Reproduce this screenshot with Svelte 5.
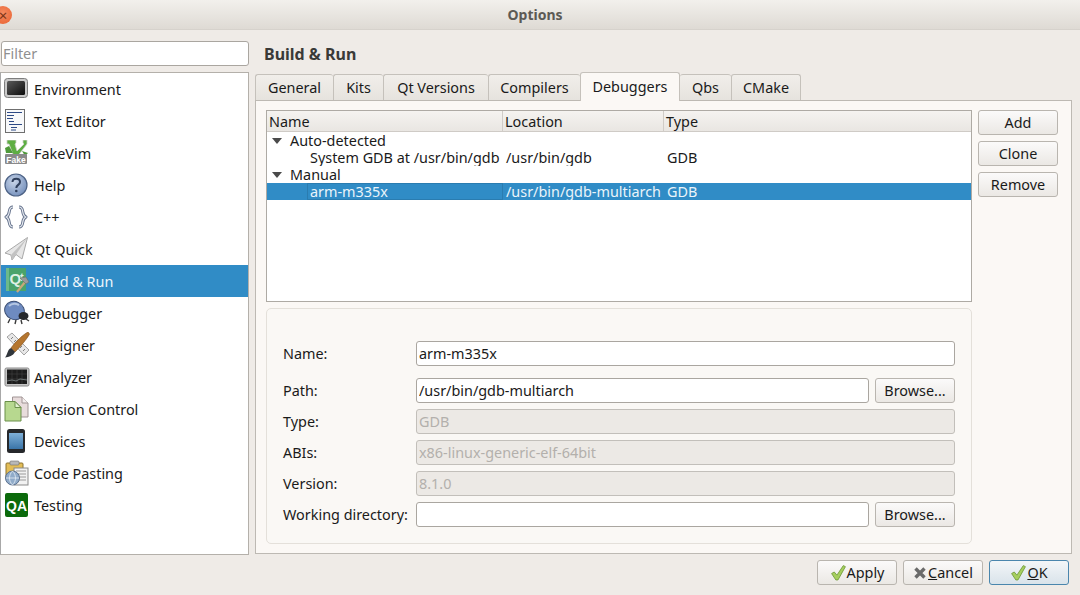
<script lang="ts">
	const categories = [
		{ id: 'env', label: 'Environment' },
		{ id: 'text', label: 'Text Editor' },
		{ id: 'vim', label: 'FakeVim' },
		{ id: 'help', label: 'Help' },
		{ id: 'cpp', label: 'C++' },
		{ id: 'quick', label: 'Qt Quick' },
		{ id: 'build', label: 'Build & Run' },
		{ id: 'debug', label: 'Debugger' },
		{ id: 'designer', label: 'Designer' },
		{ id: 'analyzer', label: 'Analyzer' },
		{ id: 'vcs', label: 'Version Control' },
		{ id: 'devices', label: 'Devices' },
		{ id: 'paste', label: 'Code Pasting' },
		{ id: 'qa', label: 'Testing' }
	];
	const tabs = [
		{ label: 'General', width: 78 },
		{ label: 'Kits', width: 50 },
		{ label: 'Qt Versions', width: 105 },
		{ label: 'Compilers', width: 92 },
		{ label: 'Debuggers', width: 100 },
		{ label: 'Qbs', width: 51 },
		{ label: 'CMake', width: 70 }
	];
	let activeCategory = $state('build');
	let activeTab = $state('Debuggers');
</script>

{#snippet check()}
	<svg class="btn-icon" viewBox="0 0 16 16" width="17" height="17">
		<path d="M1.5 9 L4 7.5 L6.5 10.5 L12.5 1.5 L14.5 2.5 L7.5 15 L5.5 15 Z" fill="#a6cf5e" stroke="#6f9a3a" stroke-width="0.8" stroke-linejoin="round" />
	</svg>
{/snippet}

{#snippet icon(id: string)}
	<svg class="cat-icon" viewBox="0 0 26 26" width="26" height="26">
		{#if id === 'env'}
			<defs>
				<linearGradient id="envg" x1="0" y1="0" x2="1" y2="1"><stop offset="0" stop-color="#5a5a5a" /><stop offset="1" stop-color="#0c0c0c" /></linearGradient>
			</defs>
			<rect x="0.5" y="2.5" width="23" height="19" rx="3" fill="#c9c9c9" stroke="#7d7d7d" />
			<rect x="3" y="5" width="18" height="14" rx="1.5" fill="url(#envg)" />
		{:else if id === 'text'}
			<rect x="1.5" y="1.5" width="19" height="23" fill="#f7f8fa" stroke="#6f6f6f" />
			<path d="M3 4.5h15M3 7.5h7M3 10.5h6M5 13.5h5M5 16.5h13M7 19.5h6M7 22h5" stroke="#2d4a86" stroke-width="1" fill="none" />
		{:else if id === 'vim'}
			<path d="M3 0h9v3l-1 1 2 7 7-7-1-1V0h4v4L13 17h-3L5 4H3z" fill="#5eae43" stroke="#cfd2cc" stroke-width="0.8" />
			<path d="M1 8l4-2 4 7H2z M18 11l6 2-3 3z" fill="#4f9a3a" />
			<rect x="1" y="14" width="22" height="10" rx="1" fill="#8a8a8a" />
			<text x="12" y="22.5" class="fake">Fake</text>
		{:else if id === 'help'}
			<defs>
				<radialGradient id="helpg" cx="0.4" cy="0.35" r="0.75"><stop offset="0" stop-color="#c7d4e8" /><stop offset="1" stop-color="#6e8ab8" /></radialGradient>
			</defs>
			<circle cx="12" cy="13" r="11" fill="url(#helpg)" stroke="#4d6285" stroke-width="1.2" />
			<path d="M8.5 10 C8.5 5.5 16 5.5 16 10 C16 13 12.3 12.8 12.3 16" fill="none" stroke="#2f3f5c" stroke-width="2" />
			<circle cx="12.3" cy="19" r="1.3" fill="#2f3f5c" />
		{:else if id === 'cpp'}
			<path d="M9 3 C3 3 7.5 11 2 13 C7.5 15 3 23 9 23 M15 3 C21 3 16.5 11 22 13 C16.5 15 21 23 15 23" fill="none" stroke="#65728c" stroke-width="3" stroke-linejoin="round" />
			<path d="M9 3 C3 3 7.5 11 2 13 C7.5 15 3 23 9 23 M15 3 C21 3 16.5 11 22 13 C16.5 15 21 23 15 23" fill="none" stroke="#e8ecf2" stroke-width="1.2" stroke-linejoin="round" />
		{:else if id === 'quick'}
			<path d="M1 17 L23.5 1.5 L18 23 L12 18.5 L8 24 L7 19 Z" fill="#e6e6e6" stroke="#a9a9a9" stroke-linejoin="round" />
			<path d="M7 19 L23.5 1.5 L12 18.5 L8 24 Z" fill="#c2c2c2" />
		{:else if id === 'build'}
			<rect x="2" y="0" width="20" height="23" fill="#4aa36b" />
			<rect x="2" y="0" width="3" height="23" fill="#6cb98a" />
			<text x="5.5" y="16" class="qt">Q</text>
			<text x="16" y="13" class="qt small">t</text>
			<path d="M13 24 L21 14" stroke="#c8a77a" stroke-width="2.2" />
			<path d="M16 10 L22 9 L25 14 L22 16 L19 13 Z" fill="#9a9a9a" stroke="#5f6f68" stroke-width="0.6" />
		{:else if id === 'debug'}
			<ellipse cx="10.5" cy="10.5" rx="10" ry="9" fill="#6e8bc0" stroke="#3c4f73" transform="rotate(25 10.5 10.5)" />
			<path d="M5 6 Q9 2 15 5" stroke="#b4c6e2" stroke-width="2" fill="none" />
			<ellipse cx="19.5" cy="16" rx="5" ry="4" fill="#26282c" />
			<path d="M6 19l-2 4M12 20l-1 4M17 20l1 4M22 19l3 2" stroke="#3a3a3a" stroke-width="1.4" />
		{:else if id === 'designer'}
			<path d="M3 5 L8 1 L25 18 L20 23 Z" fill="#e8e8e8" stroke="#a3a3a3" />
			<path d="M7 7l2-2M10 10l2-2M13 13l2-2M16 16l2-2M19 19l2-2" stroke="#808080" />
			<path d="M24 0 C20 2 11 10 7 16 L11 20 C16 15 23 7 25.5 2 Z" fill="#b5762f" stroke="#7a4a18" stroke-width="0.6" />
			<path d="M7 16 L11 20 C9 24 5 25 1 25.5 C4 22 3 18 7 16 Z" fill="#30353b" />
		{:else if id === 'analyzer'}
			<rect x="1" y="4" width="24" height="18" rx="1.5" fill="#c4c4c4" stroke="#8a8a8a" />
			<rect x="3" y="5.5" width="20" height="14.5" fill="#1c1c1c" />
			<path d="M8 6v14M13 6v14M18 6v14M3 10h20M3 15h20" stroke="#454545" stroke-width="0.6" />
			<path d="M3 17 L8 16 L12 17 L16 15 L23 16" stroke="#8a9494" stroke-width="0.7" fill="none" />
		{:else if id === 'vcs'}
			<path d="M8.5 1 H18 L24 7 V21 H8.5 Z" fill="#e8dcdc" stroke="#a09494" />
			<path d="M18 1 V7 H24" fill="#f4eeee" stroke="#a09494" />
			<path d="M1 5.5 H11 L17 11.5 V25 H1 Z" fill="#b7d88f" stroke="#6b8f4a" />
			<path d="M11 5.5 V11.5 H17 Z" fill="#e2f0cf" stroke="#6b8f4a" />
		{:else if id === 'devices'}
			<rect x="3" y="1" width="18" height="24" rx="2.5" fill="#26282b" />
			<defs>
				<linearGradient id="devg" x1="0" y1="0" x2="0" y2="1"><stop offset="0" stop-color="#7fb0d8" /><stop offset="1" stop-color="#3a74a8" /></linearGradient>
			</defs>
			<rect x="5" y="5" width="14" height="16" fill="url(#devg)" />
		{:else if id === 'paste'}
			<rect x="2" y="3" width="17" height="15" rx="1" fill="#e3bd57" stroke="#8c7230" />
			<rect x="6" y="1" width="9" height="4" rx="1" fill="#b8b8b8" stroke="#6f6f6f" stroke-width="0.6" />
			<rect x="10" y="8" width="14" height="17" fill="#f2f2f2" stroke="#8b8b8b" />
			<path d="M12 11h10M12 14h10M14 17h8M14 20h8" stroke="#9a9a9a" />
			<circle cx="8.5" cy="18" r="7" fill="#90abc9" stroke="#5b718f" />
			<path d="M2 18h13M8.5 11c-4 4-4 10 0 14M8.5 11c4 4 4 10 0 14" stroke="#e6edf5" stroke-width="0.8" fill="none" />
		{:else if id === 'qa'}
			<rect x="1" y="1" width="23" height="24" rx="2" fill="#0b6a0b" />
			<text x="12.5" y="18.5" class="qa">QA</text>
		{/if}
	</svg>
{/snippet}

<div class="window">
	<header class="titlebar">
		<span class="close"><span>×</span></span>
		<span class="title">Options</span>
	</header>

	<div class="body">
		<aside class="side">
			<input class="filter" placeholder="Filter" />
			<ul class="categories">
				{#each categories as c}
					<li class:selected={c.id === activeCategory}>
						<button class="cat" onclick={() => (activeCategory = c.id)}>
							{@render icon(c.id)}
							<span>{c.label}</span>
						</button>
					</li>
				{/each}
			</ul>
		</aside>

		<main class="content">
			<h2>Build &amp; Run</h2>
			<div class="tabs">
				{#each tabs as t}
					<button
						class="tab"
						class:active={t.label === activeTab}
						style:width="{t.width}px"
						onclick={() => (activeTab = t.label)}>{t.label}</button
					>
				{/each}
			</div>

			<section class="panel">
				<div class="top">
					<div class="tree">
						<div class="row head">
							<div>Name</div>
							<div>Location</div>
							<div>Type</div>
						</div>
						<div class="row group"><div><i class="arrow"></i>Auto-detected</div><div></div><div></div></div>
						<div class="row leaf">
							<div>System GDB at /usr/bin/gdb</div>
							<div>/usr/bin/gdb</div>
							<div>GDB</div>
						</div>
						<div class="row group"><div><i class="arrow"></i>Manual</div><div></div><div></div></div>
						<div class="row leaf current">
							<div><span class="focus">arm-m335x</span></div>
							<div>/usr/bin/gdb-multiarch</div>
							<div>GDB</div>
						</div>
					</div>
					<div class="actions">
						<button class="btn">Add</button>
						<button class="btn">Clone</button>
						<button class="btn">Remove</button>
					</div>
				</div>

				<div class="details">
					<label for="f-name">Name:</label>
					<input id="f-name" class="wide" value="arm-m335x" />

					<label for="f-path" class="gap">Path:</label>
					<input id="f-path" class="gap" value="/usr/bin/gdb-multiarch" />
					<button class="btn browse gap">Browse...</button>

					<label for="f-type">Type:</label>
					<input id="f-type" class="wide" value="GDB" disabled />

					<label for="f-abis">ABIs:</label>
					<input id="f-abis" class="wide" value="x86-linux-generic-elf-64bit" disabled />

					<label for="f-version">Version:</label>
					<input id="f-version" class="wide" value="8.1.0" disabled />

					<label for="f-dir">Working directory:</label>
					<input id="f-dir" value="" />
					<button class="btn browse">Browse...</button>
				</div>
			</section>
		</main>
	</div>

	<footer class="buttons">
		<button class="btn foot">{@render check()}Apply</button>
		<button class="btn foot">
			<svg class="btn-icon" viewBox="0 0 14 14" width="14" height="14">
				<path d="M2.5 2.5 L11.5 11.5 M11.5 2.5 L2.5 11.5" stroke="#6a6a6a" stroke-width="3.4" />
			</svg>
			<span class="cancel"><u>C</u>ancel</span>
		</button>
		<button class="btn foot default">{@render check()}<span><u>O</u>K</span></button>
	</footer>
</div>

<style>
	:global(body) {
		margin: 0;
		background: #efebe7;
	}

	.window {
		width: 1080px;
		height: 595px;
		overflow: hidden;
		display: flex;
		flex-direction: column;
		font-family: 'Noto Sans', sans-serif;
		font-size: 14.4px;
		color: #1a1a1a;
		background: #efebe7;
	}

	.titlebar {
		height: 30px;
		flex: none;
		position: relative;
		display: flex;
		align-items: center;
		justify-content: center;
		box-sizing: border-box;
		border-bottom: 1px solid #d6d2cc;
		background: linear-gradient(#f2f0ec, #dedad4);
	}

	.title {
		font-weight: 700;
		font-size: 14px;
		color: #5c5a55;
		margin-left: -10px;
	}

	.close {
		position: absolute;
		left: -6px;
		top: 6px;
		width: 18px;
		height: 18px;
		border-radius: 50%;
		background: radial-gradient(circle at 50% 40%, #f58a5f, #e8602f);
		display: flex;
		align-items: center;
		justify-content: center;
		font-size: 15px;
		line-height: 1;
		color: #7a3416;
	}

	.body {
		flex: 1;
		display: flex;
		min-height: 0;
	}

	.side {
		width: 249px;
		flex: none;
		box-sizing: border-box;
		padding: 11px 0 0 0;
		display: flex;
		flex-direction: column;
	}

	input {
		box-sizing: border-box;
		height: 25px;
		min-width: 0;
		margin: 0;
		padding: 0 2px 0 2px;
		border: 1px solid #aaa6a0;
		border-radius: 3px;
		background: #fff;
		font: inherit;
		color: #1a1a1a;
		outline: none;
	}

	input:disabled {
		background: #ece9e5;
		color: #b3b0ac;
		border-color: #c2bfba;
	}

	.filter {
		margin-left: 1px;
		width: 248px;
		height: 25px;
		padding-left: 1px;
	}

	.filter::placeholder {
		color: #8f8f8f;
		opacity: 1;
	}

	.categories {
		list-style: none;
		margin: 6px 0 0;
		padding: 0;
		width: 249px;
		height: 483px;
		box-sizing: border-box;
		border: 1px solid #b4b0aa;
		border-left-color: #a8a8a8;
		background: #fff;
	}

	.cat {
		all: unset;
		box-sizing: border-box;
		display: flex;
		align-items: center;
		gap: 4px;
		width: 100%;
		height: 32px;
		padding-left: 3px;
	}

	.selected .cat {
		background: #308cc6;
		color: #eef6fb;
	}

	.cat-icon {
		flex: none;
	}

	.fake {
		font-family: 'Liberation Sans', sans-serif;
		font-size: 8.5px;
		font-weight: 700;
		fill: #fff;
		text-anchor: middle;
	}

	.qt {
		font-family: 'Liberation Sans', sans-serif;
		font-size: 15px;
		font-weight: 700;
		fill: #dff0e4;
	}

	.qt.small {
		font-size: 11px;
	}

	.qa {
		font-family: 'Liberation Sans', sans-serif;
		font-size: 14px;
		font-weight: 700;
		fill: #fff;
		text-anchor: middle;
	}

	.content {
		flex: 1;
		min-width: 0;
		padding: 14px 8px 0 6px;
		display: flex;
		flex-direction: column;
	}

	h2 {
		margin: 0 0 0 9px;
		height: 30px;
		line-height: 20px;
		font-size: 16px;
		font-weight: 700;
		color: #3a3a38;
	}

	.tabs {
		display: flex;
		height: 26px;
		align-items: flex-end;
		position: relative;
		z-index: 1;
	}

	.tab {
		all: unset;
		box-sizing: border-box;
		height: 26px;
		text-align: center;
		border: 1px solid #c5c1bb;
		border-right: 0;
		border-bottom: 0;
		border-radius: 3px 3px 0 0;
		background: linear-gradient(#f1eeea, #e6e3de);
		line-height: 25px;
	}

	.tab:last-child {
		border-right: 1px solid #c5c1bb;
	}

	.tab.active {
		height: 29px;
		margin-bottom: -1px;
		border-right: 1px solid #c5c1bb;
		background: #fbf8f5;
		line-height: 26px;
	}

	.tab.active + .tab {
		border-left: 0;
	}

	.panel {
		box-sizing: border-box;
		height: 454px;
		padding: 9px 13px 9px 10px;
		border: 1px solid #bdb9b3;
		background: #fbf8f5;
		display: flex;
		flex-direction: column;
		gap: 6px;
	}

	.top {
		display: flex;
		gap: 6px;
		height: 192px;
		flex: none;
	}

	.tree {
		width: 706px;
		box-sizing: border-box;
		border: 1px solid #aeaaa4;
		background: #fff;
		flex: none;
	}

	.row {
		display: grid;
		grid-template-columns: 236px 161px 1fr;
		height: 17px;
		line-height: 17px;
	}

	.row > div {
		white-space: nowrap;
		overflow: hidden;
	}

	.row.head {
		box-sizing: border-box;
		height: 21px;
		line-height: 21px;
		background: linear-gradient(#f5f3f0, #e9e6e2);
		border-bottom: 1px solid #cfcbc6;
	}

	.row.head > div {
		padding-left: 2px;
		border-right: 1px solid #d0ccc7;
	}

	.row.head > div:last-child {
		border-right: 0;
	}

	.group > div:first-child {
		padding-left: 23px;
		position: relative;
	}

	.leaf > div {
		padding-left: 3px;
	}

	.leaf > div:first-child {
		padding-left: 43px;
	}

	.arrow {
		position: absolute;
		left: 5px;
		top: 6px;
		border-left: 5px solid transparent;
		border-right: 5px solid transparent;
		border-top: 6px solid #4a4a4a;
	}

	.current {
		background: #308cc6;
		color: #eaf4fa;
	}

	.current > div:first-child {
		padding-left: 40px;
	}

	.focus {
		display: block;
		box-sizing: border-box;
		padding-left: 2px;
		border: 1px solid #2a7cb0;
		height: 17px;
		line-height: 15px;
	}

	.actions {
		display: flex;
		flex-direction: column;
		gap: 6px;
		width: 80px;
		flex: none;
	}

	.btn {
		box-sizing: border-box;
		height: 25px;
		margin: 0;
		padding: 0;
		border: 1px solid #b9b5af;
		border-radius: 3px;
		background: linear-gradient(#fbfafa, #ebe8e4);
		font: inherit;
		color: #1a1a1a;
	}

	.details {
		width: 706px;
		height: 236px;
		box-sizing: border-box;
		padding: 32px 17px 0 16px;
		border: 1px solid #e4e0da;
		border-radius: 5px;
		background: #faf8f5;
		display: grid;
		grid-template-columns: 133px 453px 80px;
		grid-template-rows: 25px 31px 25px 25px 25px 25px;
		row-gap: 6px;
		align-items: center;
	}

	.details label {
		grid-column: 1;
	}

	.details input {
		grid-column: 2;
		width: 453px;
	}

	.details input.wide {
		grid-column: 2 / 4;
		width: 539px;
	}

	.details .gap {
		margin-top: 6px;
	}

	.browse {
		grid-column: 3;
		width: 80px;
		margin-left: 6px;
	}

	.buttons {
		height: 41px;
		flex: none;
		box-sizing: border-box;
		padding: 6px 11px 0 0;
		margin-top: -1px;
		display: flex;
		justify-content: flex-end;
		gap: 6px;
	}

	.foot {
		width: 80px;
		display: flex;
		align-items: center;
		justify-content: center;
		gap: 0;
	}

	.cancel {
		margin-left: 1px;
	}

	.default {
		border-color: #4a86ad;
		background: linear-gradient(#f3f6f8, #d9e3ea);
	}

	.btn-icon {
		flex: none;
	}
</style>
